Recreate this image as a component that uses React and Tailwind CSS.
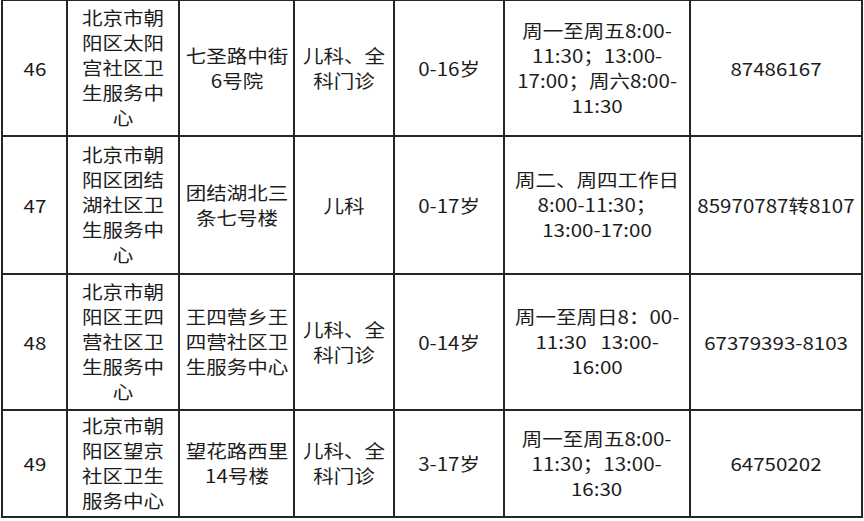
import React from "react";

const rows = [
  {
    h: "h-[136px]",
    no: "46",
    name: ["北京市朝", "阳区太阳", "宫社区卫", "生服务中", "心"],
    addr: ["七圣路中街", "6号院"],
    dept: ["儿科、全", "科门诊"],
    age: ["0-16岁"],
    time: ["周一至周五8:00-", "11:30；13:00-", "17:00；周六8:00-", "11:30"],
    tel: ["87486167"],
  },
  {
    h: "h-[138px]",
    no: "47",
    name: ["北京市朝", "阳区团结", "湖社区卫", "生服务中", "心"],
    addr: ["团结湖北三", "条七号楼"],
    dept: ["儿科"],
    age: ["0-17岁"],
    time: ["周二、周四工作日", "8:00-11:30；", "13:00-17:00"],
    tel: ["85970787转8107"],
  },
  {
    h: "h-[136px]",
    no: "48",
    name: ["北京市朝", "阳区王四", "营社区卫", "生服务中", "心"],
    addr: ["王四营乡王", "四营社区卫", "生服务中心"],
    dept: ["儿科、全", "科门诊"],
    age: ["0-14岁"],
    time: ["周一至周日8：00-", "11:30   13:00-", "16:00"],
    tel: ["67379393-8103"],
  },
  {
    h: "h-[107px]",
    no: "49",
    name: ["北京市朝", "阳区望京", "社区卫生", "服务中心"],
    addr: ["望花路西里", "14号楼"],
    dept: ["儿科、全", "科门诊"],
    age: ["3-17岁"],
    time: ["周一至周五8:00-", "11:30；13:00-", "16:30"],
    tel: ["64750202"],
  },
];

function Cell({ lines }) {
  return (
    <td className="border-2 border-[#262626] p-0 text-center align-middle">
      <div className="inline-block scale-x-[1.14] whitespace-pre leading-[25px]">
        {lines.map((l, i) => (
          <div key={i}>{l}</div>
        ))}
      </div>
    </td>
  );
}

export default function App() {
  return (
    <div
      className="w-[864px] h-[521px] bg-white overflow-hidden pl-px text-[18px] text-[#1c1c1c]"
      style={{ fontFamily: '"Noto Sans CJK SC", "Noto Sans", sans-serif' }}
    >
      <table className="border-collapse table-fixed w-[860px] -mt-px">
        <colgroup>
          <col className="w-[65px]" />
          <col className="w-[112px]" />
          <col className="w-[115px]" />
          <col className="w-[100px]" />
          <col className="w-[110px]" />
          <col className="w-[186px]" />
          <col className="w-[172px]" />
        </colgroup>
        <tbody>
          {rows.map((r) => (
            <tr key={r.no} className={r.h}>
              <Cell lines={[r.no]} />
              <Cell lines={r.name} />
              <Cell lines={r.addr} />
              <Cell lines={r.dept} />
              <Cell lines={r.age} />
              <Cell lines={r.time} />
              <Cell lines={r.tel} />
            </tr>
          ))}
        </tbody>
      </table>
    </div>
  );
}
